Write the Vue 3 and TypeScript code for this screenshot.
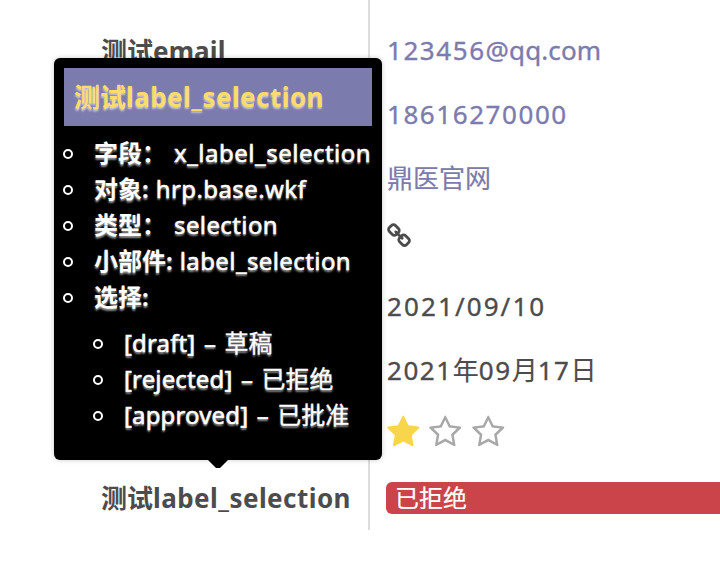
<script setup lang="ts">
interface Part { text: string; kind: string }
interface Detail { label: string; value: string; kind: string }

const email: Part[] = [
  { text: '123456', kind: 'digits' },
  { text: '@qq.com', kind: 'latin' },
]
const longDate: Part[] = [
  { text: '2021', kind: 'digits' },
  { text: '年', kind: 'han' },
  { text: '09', kind: 'digits' },
  { text: '月', kind: 'han' },
  { text: '17', kind: 'digits' },
  { text: '日', kind: 'han' },
]
const details: Detail[] = [
  { label: '字段：', value: 'x_label_selection', kind: 'field' },
  { label: '对象:', value: 'hrp.base.wkf', kind: 'model' },
  { label: '类型：', value: 'selection', kind: 'type' },
  { label: '小部件:', value: 'label_selection', kind: 'widget' },
]
const options = [
  { key: 'draft', name: '草稿' },
  { key: 'rejected', name: '已拒绝' },
  { key: 'approved', name: '已批准' },
]
const starFull = 'M1728 647q0 22-26 48l-363 354 86 500q1 7 1 20 0 21-10.5 35.5t-30.5 14.5q-19 0-40-12l-449-236-449 236q-22 12-40 12-21 0-31.5-14.5t-10.5-35.5q0-6 2-20l86-500-364-354q-25-27-25-48 0-37 56-46l502-73 225-455q19-41 49-41t49 41l225 455 502 73q56 9 56 46z'
const starEmpty = 'M1201 1004l306-297-422-62-189-382-189 382-422 62 306 297-73 421 378-199 377 199zm527-357q0 22-26 48l-363 354 86 500q1 7 1 20 0 50-41 50-19 0-40-12l-449-236-449 236q-22 12-40 12-21 0-31.5-14.5t-10.5-35.5q0-6 2-20l86-500-364-354q-25-27-25-48 0-37 56-46l502-73 225-455q19-41 49-41t49 41l225 455 502 73q56 9 56 46z'
const stars = [true, false, false]
</script>

<template>
  <main class="page">
    <div class="form">
      <div class="labels">
        <div class="row name">测试<span class="bold-latin email">email</span></div>
        <div class="row name">测试<span class="bold-latin">label_selection</span></div>
      </div>
      <div class="values">
        <div class="row text link"><span v-for="(p, i) in email" :key="i" :class="p.kind">{{ p.text }}</span></div>
        <div class="row text link"><span class="digits">18616270000</span></div>
        <div class="row text link"><span class="han">鼎医官网</span></div>
        <div class="row icon-row">
          <svg class="chain" viewBox="0 0 1792 1792"><path d="M1520 1216q0-40-28-68l-208-208q-28-28-68-28-42 0-72 32 3 3 19 18.5t21.5 21.5 15 19 13 25.5 3.5 27.5q0 40-28 68t-68 28q-15 0-27.5-3.5t-25.5-13-19-15-21.5-21.5-18.5-19q-33 31-33 73 0 40 28 68l206 207q27 27 68 27 40 0 68-26l147-146q28-28 28-67zm-703-705q0-40-28-68l-206-207q-28-28-68-28-39 0-68 27l-147 146q-28 28-28 67 0 40 28 68l208 208q27 27 68 27 42 0 72-31-3-3-19-18.5t-21.5-21.5-15-19-13-25.5-3.5-27.5q0-40 28-68t68-28q15 0 27.5 3.5t25.5 13 19 15 21.5 21.5 18.5 19q33-31 33-73zm895 705q0 120-85 203l-147 146q-83 83-203 83-121 0-204-85l-206-207q-83-83-83-203 0-123 88-209l-88-88q-86 88-208 88-120 0-204-84l-208-208q-84-84-84-204t85-203l147-146q83-83 203-83 121 0 204 85l206 207q83 83 83 203 0 123-88 209l88 88q86-88 208-88 120 0 204 84l208 208q84 84 84 204z" /></svg>
        </div>
        <div class="row text"><span class="digits date">2021/09/10</span></div>
        <div class="row text"><span v-for="(p, i) in longDate" :key="i" :class="p.kind">{{ p.text }}</span></div>
        <div class="row stars">
          <svg v-for="(on, i) in stars" :key="i" class="star" :class="{ on }" viewBox="0 0 1792 1792"><path :d="on ? starFull : starEmpty" /></svg>
        </div>
        <div class="row badge-row"><div class="badge">已拒绝</div></div>
      </div>
    </div>

    <aside class="tooltip">
      <h1 class="title">测试<span class="bold-latin">label_selection</span></h1>
      <ul class="list">
        <li v-for="d in details" :key="d.label" class="item">
          <b class="key">{{ d.label }}</b><span class="val" :class="d.kind">{{ d.value }}</span>
        </li>
        <li class="item"><b class="key">选择:</b></li>
      </ul>
      <ul class="list nested">
        <li v-for="o in options" :key="o.key" class="item"><span class="opt">[{{ o.key }}]</span><span class="dash">–</span><span class="choice">{{ o.name }}</span></li>
      </ul>
    </aside>
  </main>
</template>

<style>
body {
  margin: 0;
  background: #fff;
}
</style>

<style scoped>
.page {
  position: relative;
  width: 720px;
  height: 570px;
  overflow: hidden;
  background: #fff;
  color: #4c4c4c;
  font-family: "Noto Sans", "Noto Sans CJK SC", sans-serif;
  font-size: 26px;
}
.form {
  display: grid;
  grid-template-columns: 370px 350px;
  height: 530px;
}
.labels, .values {
  display: flex;
  flex-direction: column;
  box-sizing: border-box;
  height: 530px;
  padding-top: 19px;
}
.labels {
  border-right: 2px solid #ddd;
  padding-left: 101px;
  justify-content: space-between;
}
.values {
  padding-left: 16px;
}
.row {
  display: flex;
  flex: none;
  align-items: center;
  box-sizing: border-box;
  height: 64px;
  line-height: 36px;
  white-space: nowrap;
}
.text {
  padding: 0 0 2px 1px;
}
.digits, .latin {
  -webkit-text-stroke: 0.35px currentColor;
}
.han {
  -webkit-text-stroke: 0.15px currentColor;
}
.name {
  font-weight: 700;
}
.bold-latin {
  letter-spacing: 0.45px;
}
.bold-latin.email {
  letter-spacing: 0.1px;
}
.link {
  color: #7c7bad;
}
.digits {
  letter-spacing: 1.56px;
}
.date {
  letter-spacing: 2.1px;
}
.latin {
  letter-spacing: 0.1px;
}
.chain {
  width: 26px;
  height: 26px;
  fill: #4c4c4c;
}
.icon-row {
  padding-bottom: 14px;
}
.stars {
  gap: 7.8px;
  padding-bottom: 5px;
}
.star {
  width: 34.5px;
  height: 34.5px;
  fill: #a8a8a8;
}
.star.on {
  fill: #f9d54c;
}
.badge-row {
  height: 62px;
}
.badge {
  width: 350px;
  height: 32px;
  box-sizing: border-box;
  padding-left: 9px;
  border-radius: 6px 0 0 6px;
  background: #cb444a;
  color: #fff;
  font-size: 24px;
  line-height: 31px;
  -webkit-text-stroke: 0.2px currentColor;
}
.tooltip {
  position: absolute;
  left: 54px;
  top: 58px;
  width: 328px;
  height: 402px;
  box-sizing: border-box;
  padding: 10px;
  border-radius: 6px;
  background: #000;
  color: #fff;
  font-size: 24px;
  box-shadow: 0 0 5px rgba(0, 0, 0, 0.22);
  text-shadow: 0 2px 2px rgba(255, 255, 255, 0.6);
}
.tooltip::after {
  content: "";
  position: absolute;
  left: 154px;
  top: 402px;
  width: 20px;
  height: 8px;
  background: #000;
  clip-path: polygon(0 0, 100% 0, 60% 100%, 40% 100%);
}
.title {
  height: 58px;
  margin: 0 0 10px;
  padding-left: 10px;
  background: #7c7bad;
  color: #fbdc6c;
  font-size: 26px;
  line-height: 58px;
  white-space: nowrap;
}
.list {
  margin: 0;
  padding: 0;
  list-style: none;
}
.nested {
  margin-top: 10px;
  padding-left: 30px;
}
.item {
  display: flex;
  align-items: center;
  height: 36px;
  line-height: 34px;
  white-space: nowrap;
}
.item::before {
  content: "";
  flex: none;
  width: 6px;
  height: 6px;
  margin: 0 21px 0 -1px;
  border: 2px solid #fff;
  border-radius: 50%;
}
.key {
  height: 36px;
  margin-right: 7px;
}
.val, .opt, .dash, .choice {
  height: 36px;
  -webkit-text-stroke: 0.5px currentColor;
}
.choice {
  -webkit-text-stroke-width: 0.3px;
}
.val {
  letter-spacing: 0.4px;
}
.field {
  margin-left: 1px;
  letter-spacing: 0.5px;
}
.type {
  margin-left: 1px;
}
.opt {
  letter-spacing: 0.15px;
}
.dash {
  margin: 0 8.5px;
}
</style>
